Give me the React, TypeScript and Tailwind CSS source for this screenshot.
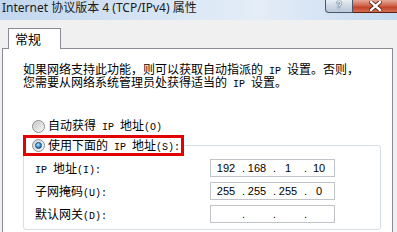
import React from 'react';

// split mixed text so latin runs get a half-width mono face (like SimSun)
const mixed = (s: string) =>
  s
    .split(/([\x20-\x7e]+)/)
    .filter(Boolean)
    .map((part, i) =>
      /^[\x20-\x7e]+$/.test(part) ? (
        <span key={i} className="font-['Liberation_Mono'] text-[10px] leading-none">
          {part}
        </span>
      ) : (
        <span key={i}>{part}</span>
      )
    );

const Radio: React.FC<{ checked?: boolean }> = ({ checked }) => (
  <span className="w-[13px] h-[13px] rounded-full border border-[#8a8a8a] bg-[linear-gradient(135deg,#d4d4d4,#f9f9f9)] flex items-center justify-center shrink-0">
    {checked ? (
      <span className="w-[7px] h-[7px] rounded-full border border-[#1a4a78] bg-[radial-gradient(circle_at_40%_35%,#b8e8ff,#3b8fd0_55%,#144778)]" />
    ) : (
      <span className="w-[9px] h-[9px] rounded-full bg-[linear-gradient(135deg,#c9c9c9,#f2f2f2)]" />
    )}
  </span>
);

const IpField: React.FC<{ parts: string[] }> = ({ parts }) => (
  <div className="w-[125px] h-[18px] border border-[#c0c3c8] bg-white flex items-center pl-[5px] font-['Liberation_Sans'] text-[11px] leading-none text-black">
    {parts.map((p, i) => (
      <React.Fragment key={i}>
        {i > 0 && <span className="w-[11px] pl-[6px]">.</span>}
        <span className="w-[20px] text-center">{p}</span>
      </React.Fragment>
    ))}
  </div>
);

const TitleBar: React.FC = () => (
  <div className="h-[20px] flex bg-[linear-gradient(90deg,#c2d6ee,#dae7f5_45%,#e4edf8_65%,#c5d9ef)]">
    <div className="flex-1 pl-[2px] text-[12px] leading-[16px] text-[#1a1a1a] font-['Noto_Sans','Noto_Sans_CJK_SC',sans-serif] whitespace-nowrap">
      Internet 协议版本 4 (TCP/IPv4) 属性
    </div>
    <div className="flex h-[13px]">
      <div className="w-[28px] border border-t-0 border-[#4b5668] rounded-bl-[4px] bg-[linear-gradient(180deg,#e8eef6,#cdd7e4_50%,#bcc8d8)] flex items-center justify-center">
        <span className="text-[10px] leading-none font-bold text-[#eef2f7] [text-shadow:0_0_1px_#3a4250,0_0_1px_#3a4250] font-['Liberation_Sans']">
          ?
        </span>
      </div>
      <div className="w-[44px] border-b border-[#5a1e14] bg-[linear-gradient(180deg,#e6a999,#d0674f_45%,#c3432b_60%,#d56d4f)] flex items-center justify-center">
        <svg width="13" height="10" viewBox="0 0 13 10">
          <path d="M2 1 L11 9 M11 1 L2 9" stroke="#4a1a12" strokeWidth="4" strokeLinecap="square" />
          <path d="M2 1 L11 9 M11 1 L2 9" stroke="#ffffff" strokeWidth="2.4" strokeLinecap="square" />
        </svg>
      </div>
    </div>
  </div>
);

const rows = [
  { label: 'IP 地址(I):', parts: ['192', '168', '1', '10'] },
  { label: '子网掩码(U):', parts: ['255', '255', '255', '0'] },
  { label: '默认网关(D):', parts: ['', '', '', ''] },
];

export default function App() {
  return (
    <div className="w-[397px] h-[232px] overflow-hidden bg-[#f0f0f0] font-['Noto_Sans_CJK_SC',sans-serif] text-black">
      <TitleBar />
      <div className="pt-[8px] pl-[2px]">
        <div className="relative z-10 ml-[6px] -mb-px w-[53px] h-[21px] border border-b-0 border-[#898c95] bg-white pl-[6px] text-[13px] leading-[20px]">
          常规
        </div>
        <div className="w-[391px] h-[200px] border border-[#898c95] bg-white pl-[20px] pt-[13px]">
          <div className="text-[12px] leading-[13px] whitespace-nowrap">
            <div className="h-[13px]">{mixed('如果网络支持此功能，则可以获取自动指派的 IP 设置。否则，')}</div>
            <div className="h-[13px]">{mixed('您需要从网络系统管理员处获得适当的 IP 设置。')}</div>
          </div>

          <div className="mt-[30px] ml-[9px] h-[16px] flex items-center gap-[3px] text-[12px] leading-[12px] whitespace-nowrap">
            <Radio />
            <span>{mixed('自动获得 IP 地址(O)')}</span>
          </div>

          <fieldset className="mt-[1px] w-[358px] border border-[#d5dfe5] rounded-[3px] pt-[3px] pb-[6px]">
            <legend className="-ml-px">
              <div className="w-[161px] h-[21px] border-[3px] border-[#e30000] flex items-center pl-[6px] gap-[3px] text-[12px] leading-[12px] whitespace-nowrap">
                <Radio checked />
                <span>{mixed('使用下面的 IP 地址(S):')}</span>
              </div>
            </legend>
            <div className="flex flex-col gap-[5px]">
              {rows.map((r) => (
                <div key={r.label} className="h-[18px] flex items-center">
                  <div className="w-[186px] h-[12px] pl-[11px] text-[12px] leading-[12px] whitespace-nowrap">
                    {mixed(r.label)}
                  </div>
                  <IpField parts={r.parts} />
                </div>
              ))}
            </div>
          </fieldset>
        </div>
      </div>
    </div>
  );
}
